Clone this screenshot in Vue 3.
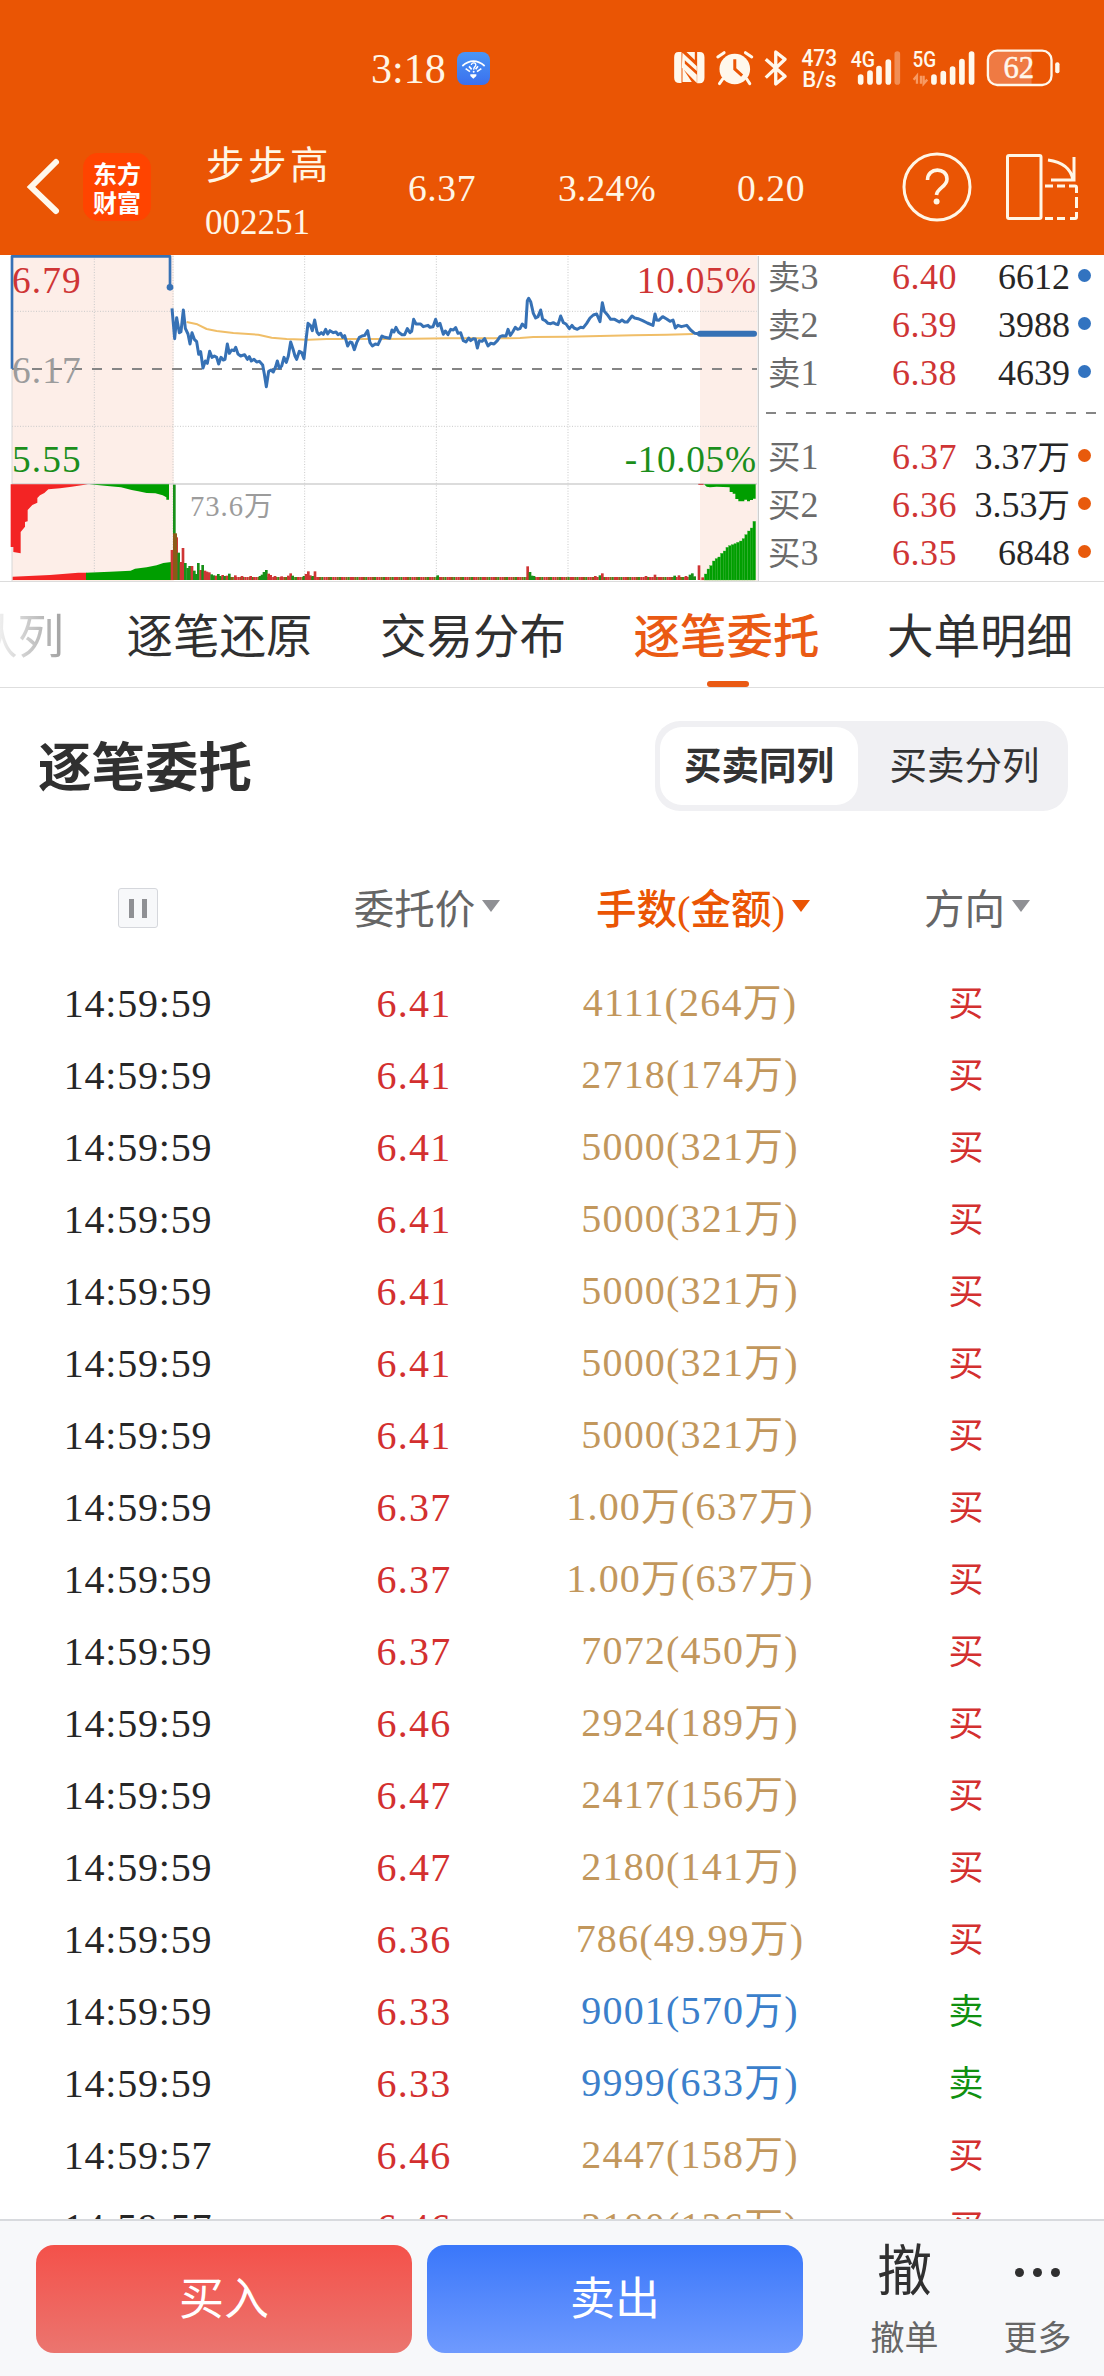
<script setup>
import { h } from 'vue'

// Wraps Chinese runs in a span so they can be sized independently of the digits.
const Mixed = ({ text }) =>
  text
    .split(/([\u4e00-\u9fff]+)/)
    .filter(Boolean)
    .map((part) => (/[\u4e00-\u9fff]/.test(part) ? h('span', { class: 'han' }, part) : part))
Mixed.props = ['text']

const tabs = ['逐笔还原', '交易分布', '逐笔委托', '大单明细']
const activeTab = '逐笔委托'

const sells = [
  ['卖3', '6.40', '6612'],
  ['卖2', '6.39', '3988'],
  ['卖1', '6.38', '4639'],
]
const buys = [
  ['买1', '6.37', '3.37万'],
  ['买2', '6.36', '3.53万'],
  ['买3', '6.35', '6848'],
]

const orders = [
  ['14:59:59', '6.41', '4111(264万)', '买'],
  ['14:59:59', '6.41', '2718(174万)', '买'],
  ['14:59:59', '6.41', '5000(321万)', '买'],
  ['14:59:59', '6.41', '5000(321万)', '买'],
  ['14:59:59', '6.41', '5000(321万)', '买'],
  ['14:59:59', '6.41', '5000(321万)', '买'],
  ['14:59:59', '6.41', '5000(321万)', '买'],
  ['14:59:59', '6.37', '1.00万(637万)', '买'],
  ['14:59:59', '6.37', '1.00万(637万)', '买'],
  ['14:59:59', '6.37', '7072(450万)', '买'],
  ['14:59:59', '6.46', '2924(189万)', '买'],
  ['14:59:59', '6.47', '2417(156万)', '买'],
  ['14:59:59', '6.47', '2180(141万)', '买'],
  ['14:59:59', '6.36', '786(49.99万)', '买'],
  ['14:59:59', '6.33', '9001(570万)', '卖'],
  ['14:59:59', '6.33', '9999(633万)', '卖'],
  ['14:59:57', '6.46', '2447(158万)', '买'],
  ['14:59:57', '6.46', '2100(136万)', '买'],
]

// Price line, in chart units (three per pixel).
const price = [
  '516,175 524,266 530,203 538,248 543,245 550,180 556,235 564,252 570,282 576,248 583,268 590,275 596,313',
  '602,305 609,354 616,333 622,340 629,304 636,322 643,318 650,322 656,342 663,322 670,330 675,328 682,282',
  '688,310 695,300 702,302 707,292 714,312 722,318 734,314 742,328 748,320 754,333 762,328 770,336 778,334',
  '788,345 793,372 799,410 806,364 813,360 820,366 827,350 832,333 838,355 845,348 852,322 859,337 865,318',
  '872,276 879,297 885,318 890,328 898,304 905,308 912,326 918,270 924,220 931,226 937,242 944,210 951,246',
  '957,254 964,248 970,253 977,238 983,252 990,242 1000,248 1008,246 1014,254 1022,250 1028,262 1034,257',
  '1043,288 1050,276 1056,278 1063,299 1070,278 1078,262 1086,258 1094,256 1103,242 1110,278 1117,288',
  '1126,282 1134,284 1146,258 1154,262 1169,265 1176,240 1182,246 1188,232 1196,247 1206,254 1214,254',
  '1222,236 1230,248 1235,244 1241,208 1248,222 1262,222 1270,230 1284,226 1290,232 1299,230 1307,208',
  '1313,228 1320,220 1330,253 1336,243 1344,254 1352,238 1360,240 1367,233 1374,250 1382,248 1390,272',
  '1398,276 1406,264 1412,272 1420,266 1426,267 1432,294 1438,272 1446,274 1454,266 1464,288 1472,280',
  '1482,282 1492,272 1500,260 1508,257 1518,258 1524,238 1531,256 1538,246 1546,232 1553,238 1560,236',
  '1567,222 1577,232 1582,152 1586,145 1592,155 1600,190 1607,204 1614,200 1622,180 1628,208 1636,212',
  '1644,220 1652,221 1660,218 1667,222 1674,224 1682,198 1690,218 1698,222 1708,236 1716,226 1722,234',
  '1732,238 1742,232 1750,233 1760,220 1770,204 1780,195 1790,192 1800,215 1807,158 1813,184 1822,194',
  '1832,208 1844,208 1858,216 1866,210 1874,216 1882,216 1896,198 1904,204 1914,206 1928,212 1942,219',
  '1959,226 1965,192 1970,210 1976,211 1988,200 2000,207 2010,214 2019,210 2026,234 2034,226 2044,230',
  '2060,226 2072,240 2084,250 2096,251',
].join(' ')

const average =
  '560,216 592,223 620,237 650,243 700,249 775,254 815,263 860,267 925,269 980,267 1140,267 1240,266 1350,265 1480,265 1560,264 1600,261 1700,260 1800,258 1900,256 2000,254 2080,252'

const baseline = 990
const tall = [
  [516, 90, 'r'], [523, 286, 'g'], [530, 128, 'r'], [536, 82, 'g'], [543, 54, 'r'], [549, 96, 'r'],
  [556, 51, 'g'], [563, 36, 'g'], [569, 42, 'g'], [576, 42, 'r'], [583, 28, 'g'], [589, 18, 'g'],
  [595, 51, 'g'], [602, 30, 'r'], [608, 45, 'g'], [615, 28, 'r'], [621, 25, 'r'], [628, 23, 'r'],
  [635, 17, 'g'], [641, 14, 'g'], [648, 13, 'r'], [655, 18, 'g'], [661, 12, 'g'], [668, 15, 'r'],
  [674, 12, 'g'], [681, 13, 'r'], [688, 19, 'g'], [706, 14, 'r'], [726, 12, 'r'], [752, 12, 'r'],
  [780, 12, 'g'], [786, 16, 'g'], [792, 24, 'g'], [799, 30, 'g'], [806, 19, 'r'], [812, 15, 'r'],
  [825, 12, 'r'], [845, 11, 'r'], [865, 13, 'r'], [872, 20, 'r'], [878, 13, 'g'], [912, 12, 'g'],
  [918, 18, 'r'], [925, 26, 'r'], [931, 14, 'r'], [938, 12, 'g'], [945, 26, 'r'], [1313, 14, 'g'],
  [1583, 41, 'r'], [1590, 24, 'g'], [1596, 13, 'g'], [1602, 12, 'g'], [1786, 12, 'r'], [1800, 14, 'g'],
  [1807, 20, 'r'], [1938, 12, 'r'], [1965, 16, 'r'], [2024, 13, 'g'], [2037, 14, 'r'], [2058, 12, 'r'],
  [2070, 16, 'g'], [2077, 20, 'g'], [2084, 11, 'g'], [2097, 44, 'r'], [2108, 8, 'r'],
]
const floor = Array.from({ length: 216 }, (_, i) => ({
  x: 660 + i * 6.6,
  color: ['#cf3535', '#8a6018', '#3f8a18'][((i * 7 + (i >> 2) * 5) % 9) % 3],
}))
const closing = [18, 33, 43, 57, 64, 69, 80, 87, 98, 103, 106, 109, 113, 117, 124, 136, 147, 156, 176].map(
  (height, i) => ({ x: 2113 + i * 8.1, height }),
)
</script>

<template>
  <div class="screen">
    <header>
      <div class="status">
        <span class="clock">3:18</span>
        <svg class="wifi" viewBox="0 0 99 99">
          <defs>
            <linearGradient id="wifi-bg" x1="0" y1="0" x2="0" y2="1">
              <stop offset="0" stop-color="#4b96f5" />
              <stop offset="1" stop-color="#3a70ee" />
            </linearGradient>
          </defs>
          <rect width="99" height="99" rx="24" fill="url(#wifi-bg)" />
          <g fill="none" stroke="#fff" stroke-width="5">
            <path d="M16 42q33-29 67 0" />
            <path d="M26 50l13 9M36 43l8 9M73 50l-13 9M63 43l-7 9" />
            <path d="M43 39c1-10 16-8 13 2-2 4-6 5-6 12" stroke-width="4" />
          </g>
          <circle cx="50" cy="59" r="3" fill="#fff" />
          <path d="M40 67h18v5l-9 8-9-8z" fill="#fff" />
        </svg>
        <svg class="indicators" viewBox="40 50 1170 130">
          <g fill="#fff8ec">
            <path d="M56 65h9v93h-6q-16 0-16-16V81q0-16 13-16zM120 65q14 0 14 16v61q0 16-14 17h-8V65z" />
            <path d="M68 67l43 41v14L75 90v10l36 33v25L66 112zM68 112l28 43H68zM80 65h25v24z" />
            <circle cx="225" cy="116" r="46" />
            <path d="M189 146l-10 14M261 146l9 14M174 80l19-13M276 80l-19-13" stroke="#fff8ec" stroke-width="9" stroke-linecap="round" />
            <path d="M225 87v29l22 20" fill="none" stroke="#ea5504" stroke-width="9" />
          </g>
          <path d="M318 87l58 51-28 23V65l28 22-58 55" fill="none" stroke="#fff8ec" stroke-width="10" stroke-linejoin="round" />
          <g class="sans" fill="#fff8ec">
            <text x="425" y="107" font-size="70" textLength="107" lengthAdjust="spacingAndGlyphs">473</text>
            <text x="428" y="169" font-size="66" textLength="102" lengthAdjust="spacingAndGlyphs">B/s</text>
            <text x="573" y="111" font-size="67" textLength="73" lengthAdjust="spacingAndGlyphs">4G</text>
            <text x="759" y="111" font-size="67" textLength="71" lengthAdjust="spacingAndGlyphs">5G</text>
          </g>
          <g stroke="#fff8ec" stroke-width="17" stroke-linecap="round">
            <path d="M603 140v15M631 128v27M658 115v40M686 95v60M823 140v15M851 130v25M879 116v39M907 94v61M936 71v84" />
            <path d="M713 71v84" opacity=".35" />
          </g>
          <path d="M772 160v-24l-10 12M784 136v24M792 136v24l11-12" fill="none" stroke="#f79a63" stroke-width="7" />
          <path d="M1006 63h110v99h-110q-20 0-20-20V83q0-20 20-20z" fill="#ef7a43" />
          <rect x="985" y="61" width="191" height="103" rx="28" fill="none" stroke="#fff8ec" stroke-width="7" />
          <rect x="1187" y="96" width="13" height="33" rx="6" fill="#fff8ec" />
          <text class="serif" x="1032" y="143" font-size="92" textLength="92" stroke="#fff8ec" stroke-width="1.500" fill="#fff8ec">62</text>
        </svg>
      </div>

      <div class="titlebar">
        <svg class="back" viewBox="0 0 36 60">
          <path d="M31 5L6 30l25 24" fill="none" stroke="#fff8ec" stroke-width="6" stroke-linecap="round" />
        </svg>
        <div class="logo"><span>东方</span><span>财富</span></div>
        <div class="stock">
          <span class="name">步步高</span>
          <span class="code">002251</span>
        </div>
        <span class="quote last">6.37</span>
        <span class="quote pct">3.24%</span>
        <span class="quote diff">0.20</span>
        <svg class="help" viewBox="0 0 70 70">
          <g fill="none" stroke="#fff6e6" stroke-width="3">
            <circle cx="35" cy="35" r="33" />
            <path d="M25.500 28c0-13 19.500-13 19.500-1 0 8-10 9-10.500 16" stroke-width="3.600" />
          </g>
          <circle cx="34.600" cy="49.500" r="3" fill="#fff6e6" />
        </svg>
        <svg class="rotate" viewBox="0 0 76 70">
          <g fill="none" stroke="#fff6e6" stroke-width="3">
            <rect x="3.500" y="3.500" width="33.500" height="63" rx="1.500" />
            <path d="M44 8q22 3 25 20M70 5v23H47" />
            <path d="M41 34h8M53 34h8M65 34h6q1.500 0 1.500 1.500V41M72.500 45v11M72.500 60v5q0 1.500-1.500 1.500h-5M61 66.500h-8M49 66.500h-8" />
          </g>
        </svg>
      </div>
    </header>

    <section class="market">
      <svg class="chart" viewBox="0 15 2280 978">
        <rect x="36" y="15" width="485" height="978" fill="#fdeee8" />
        <rect x="2100" y="15" width="171" height="978" fill="#fdeee8" />
        <g stroke="#c9c9c9" stroke-width="3" stroke-dasharray="3 5">
          <path d="M36 184H2270M36 529H2270M283 18V990M519 18V990M914 18V990M1309 18V990M1704 18V990" />
        </g>
        <path d="M36 18V993" stroke="#d6d6d6" stroke-width="3" />
        <path d="M36 357H2271" stroke="#858585" stroke-width="6" stroke-dasharray="30 30" />

        <g class="serif" font-size="112">
          <text x="36" y="130" fill="#cf3535" textLength="206">6.79</text>
          <text x="36" y="398" fill="#9c9c9c" textLength="206">6.17</text>
          <text x="36" y="665" fill="#1b8e1b" textLength="206">5.55</text>
          <text x="1910" y="130" fill="#cf3535" textLength="358">10.05%</text>
          <text x="1874" y="665" fill="#1b8e1b" textLength="394">-10.05%</text>
          <text x="570" y="797" font-size="86" fill="#9c9c9c" textLength="248">73.6万</text>
        </g>

        <path d="M36 702H2271" stroke="#d0d0d0" stroke-width="5" />

        <path d="M32 703H264L215 710 180 715 145 718 133 729 120 736 112 744V758L97 765 83 780V814L75 816V830L62 846V910L40 906V891H32z" fill="#f32424" />
        <path d="M268 703H507V749H499V742L488 736 466 730 440 729 415 724 395 720 363 712 330 709z" fill="#009e00" />
        <path d="M38 990V980L150 975 235 968H260V990z" fill="#f32424" />
        <path d="M258 990V968L330 965 392 962 405 956 440 952 470 946 490 939 514 936V990z" fill="#009e00" />

        <rect v-for="b in floor" :key="b.x" :x="b.x" y="981" width="6.600" height="9" :fill="b.color" />
        <rect
          v-for="[x, height, c] in tall"
          :key="'t' + x"
          :x="x - 4"
          :y="baseline - height"
          width="8"
          :height="height"
          :fill="c === 'r' ? '#cf3535' : '#189018'"
        />
        <path d="M519 850V990h12V850z" fill="#8b5a18" />
        <g fill="#009e00" stroke="#2fae2f" stroke-width="1">
          <rect v-for="b in closing" :key="b.x" :x="b.x" :y="baseline - b.height" width="8.100" :height="b.height" />
        </g>
        <path d="M2095 703h16" stroke="#cf3535" stroke-width="3" />
        <path d="M2112 703H2267V746H2259V750H2250V754H2241V749H2233V754H2215V747H2206V731H2198V726H2189V712L2150 710 2130 712 2120 710z" fill="#009e00" />

        <g fill="none" stroke-linejoin="round">
          <polyline :points="average" stroke="#f0be68" stroke-width="6" />
          <g stroke="#3671b5">
            <path d="M36 356V19H510V112" stroke-width="8" />
            <polyline :points="price" stroke-width="9" />
            <path d="M2100 251H2262" stroke-width="18" stroke-linecap="round" />
          </g>
        </g>
        <circle cx="510" cy="112" r="10" fill="#3671b5" />
        <path d="M2275 18V993" stroke="#cfcfcf" stroke-width="4" />
      </svg>

      <div class="book">
        <div class="levels sells">
          <div v-for="[label, p, qty] in sells" :key="label" class="level">
            <span class="label"><Mixed :text="label" /></span>
            <span class="p">{{ p }}</span>
            <span class="qty"><Mixed :text="qty" /></span>
            <i />
          </div>
        </div>
        <div class="split" />
        <div class="levels">
          <div v-for="[label, p, qty] in buys" :key="label" class="level">
            <span class="label"><Mixed :text="label" /></span>
            <span class="p">{{ p }}</span>
            <span class="qty"><Mixed :text="qty" /></span>
            <i />
          </div>
        </div>
      </div>
    </section>

    <nav class="tabs">
      <span class="cut">队列</span>
      <span v-for="t in tabs" :key="t" :class="{ active: t === activeTab }">{{ t }}</span>
    </nav>

    <section class="heading">
      <h1>逐笔委托</h1>
      <div class="toggle">
        <span class="on">买卖同列</span>
        <span>买卖分列</span>
      </div>
    </section>

    <div class="columns">
      <div class="cell time"><span class="pause"><b /><b /></span></div>
      <div class="cell price">委托价<i class="arrow" /></div>
      <div class="cell amount hot">手数(金额)<i class="arrow" /></div>
      <div class="cell side">方向<i class="arrow" /></div>
    </div>

    <main>
      <div v-for="([time, p, amount, side], i) in orders" :key="i" class="order" :class="{ sell: side === '卖' }">
        <span class="cell time">{{ time }}</span>
        <span class="cell price">{{ p }}</span>
        <span class="cell amount"><Mixed :text="amount" /></span>
        <span class="cell side">{{ side }}</span>
      </div>
    </main>

    <footer>
      <button class="buy">买入</button>
      <button class="sell-btn">卖出</button>
      <div class="action cancel">
        <span class="glyph">撤</span>
        <span class="caption">撤单</span>
      </div>
      <div class="action more">
        <span class="glyph dots"><i /><i /><i /></span>
        <span class="caption">更多</span>
      </div>
    </footer>
  </div>
</template>

<style>
body {
  background: #fff;
}
.han {
  font-size: 0.9em;
  line-height: 0;
}
.amount .han {
  font-size: 0.97em;
}
</style>

<style scoped>
.screen {
  width: 1104px;
  height: 2376px;
  display: flex;
  flex-direction: column;
  overflow: hidden;
  background: #fff;
  font-family: 'Liberation Serif', 'Noto Sans CJK SC', serif;
  color: #262626;
  white-space: nowrap;
}
header {
  height: 255px;
  flex: none;
  background: #ea5504;
  color: #fff6e6;
}
.status {
  height: 137px;
  display: flex;
  align-items: center;
  padding-left: 371px;
}
.clock {
  width: 86px;
  font-size: 42px;
}
.wifi {
  width: 33px;
  height: 33px;
}
.indicators {
  width: 390px;
  height: 43.3px;
  margin-left: 183px;
}
.sans {
  font-family: Roboto, sans-serif;
  font-weight: 500;
}
.serif {
  font-family: 'Liberation Serif', 'Noto Sans CJK SC', serif;
}
.titlebar {
  display: flex;
  align-items: flex-start;
}
.titlebar > * {
  flex: none;
}
.back {
  width: 36px;
  height: 60px;
  margin: 20px 22px 0 25px;
}
.logo {
  width: 68px;
  height: 68px;
  margin-top: 16px;
  box-sizing: border-box;
  padding-top: 5px;
  border-radius: 15px;
  background: #ff4400;
  color: #fff;
  font: bold 24px/29px 'Noto Sans CJK SC', sans-serif;
  display: flex;
  flex-direction: column;
  align-items: center;
}
.stock {
  width: 203px;
  margin-left: 54px;
  display: flex;
  flex-direction: column;
}
.name {
  font-size: 38.500px;
  line-height: 58px;
  letter-spacing: 3.500px;
  padding-left: 1px;
}
.code {
  font-size: 35px;
  line-height: 56px;
}
.quote {
  font-size: 37.500px;
  line-height: 104px;
  letter-spacing: 0.600px;
}
.last {
  width: 150px;
}
.pct {
  width: 179px;
  letter-spacing: 0.200px;
}
.diff {
  width: 165px;
}
.help {
  width: 70px;
  height: 70px;
  margin-top: 15px;
}
.rotate {
  width: 76px;
  height: 70px;
  margin: 15px 0 0 32px;
}

.market {
  height: 326px;
  flex: none;
  display: flex;
  border-bottom: 1px solid #dcdcdc;
}
.chart {
  width: 760px;
  height: 326px;
  flex: none;
}
.book {
  flex: 1;
}
.levels {
  display: flex;
  flex-direction: column;
  gap: 4px;
}
.level {
  height: 44px;
  display: flex;
  align-items: center;
  font-size: 36px;
  padding-left: 8px;
}
.label {
  width: 124px;
  color: #6b6b6b;
}
.p {
  width: 70px;
  color: #cf3535;
  letter-spacing: 0.500px;
}
.qty {
  flex: 1;
  text-align: right;
}
.level i {
  width: 13px;
  height: 13px;
  margin: -4px 13px 0 8px;
  border-radius: 50%;
  background: #e85a0c;
}
.sells .level i {
  background: #3273c0;
}
.split {
  height: 2px;
  margin: 17px 8px 21px 6px;
  background: repeating-linear-gradient(90deg, #858585 0 10px, transparent 10px 20px);
}

.tabs {
  height: 105px;
  flex: none;
  display: flex;
  align-items: stretch;
  gap: 67.500px;
  font-size: 46.500px;
  line-height: 112px;
  color: #303030;
  border-bottom: 1px solid #dedede;
}
.tabs span {
  position: relative;
  flex: none;
}
.cut {
  width: 64px;
  margin-right: -5px;
  direction: rtl;
  overflow: hidden;
  background: linear-gradient(90deg, #eee, #a0a0a0);
  -webkit-background-clip: text;
  background-clip: text;
  color: transparent;
}
.tabs .active {
  color: #ea5a14;
  font-weight: 500;
}
.active::after {
  content: '';
  position: absolute;
  left: 73px;
  bottom: 0;
  width: 42px;
  height: 6px;
  border-radius: 3px;
  background: #ea5a14;
}

.heading {
  height: 193px;
  flex: none;
  display: flex;
  align-items: flex-start;
  justify-content: space-between;
  padding: 33px 36px 0 38px;
  box-sizing: border-box;
}
h1 {
  margin: 0;
  font-size: 53.500px;
  line-height: 96px;
  font-weight: bold;
  color: #303030;
}
.toggle {
  width: 413px;
  height: 90px;
  box-sizing: border-box;
  padding: 6px 5px;
  display: flex;
  border-radius: 25px;
  background: #f0f0f3;
  color: #333;
  font-size: 37.500px;
  line-height: 80px;
  text-align: center;
}
.toggle span {
  flex: 1;
  padding-left: 8px;
}
.toggle .on {
  flex: none;
  width: 198px;
  height: 78px;
  padding: 0;
  border-radius: 22px;
  background: #fff;
  font-weight: bold;
}

.columns,
.order {
  display: flex;
  flex: none;
}
.cell {
  width: 276px;
  display: flex;
  align-items: center;
  justify-content: center;
  flex: none;
}
.columns {
  height: 58px;
  font-size: 40.500px;
  color: #666;
}
.columns .price,
.columns .amount,
.columns .side {
  gap: 7px;
  box-sizing: border-box;
  padding: 0 0 8px 26px;
}
.columns .side {
  padding-left: 22px;
}
.hot {
  color: #ea5504;
  font-weight: 500;
}
.arrow {
  border: 9px solid transparent;
  border-top: 12px solid #8f9094;
  border-bottom: 0;
}
.hot .arrow {
  border-top-color: #ea5504;
}
.pause {
  width: 38px;
  height: 38px;
  margin-top: -4px;
  border: 1px solid #d5d7dc;
  border-radius: 3px;
  background: #f7f8fa;
  display: flex;
  align-items: center;
  justify-content: center;
  gap: 8px;
}
.pause b {
  width: 5px;
  height: 19px;
  background: #8f9094;
}

main {
  flex: 1;
  min-height: 0;
  overflow: hidden;
  padding-top: 28px;
}
.order {
  height: 72px;
  font-size: 40px;
  letter-spacing: 0.800px;
}
.order .price {
  color: #d3302f;
  letter-spacing: 1.200px;
}
.order .amount {
  display: block;
  text-align: center;
  line-height: 72px;
  color: #c2975c;
  letter-spacing: 1.200px;
}
.order .side {
  box-sizing: border-box;
  padding: 0 0 5px 1px;
  color: #d3302f;
  font-size: 35px;
}
.sell .amount {
  color: #3b7fcb;
}
.order.sell .side {
  color: #109010;
}

footer {
  height: 131px;
  flex: none;
  display: flex;
  align-items: flex-start;
  padding: 24px 0 0 36px;
  border-top: 2px solid #d8dade;
  background: #f7f8fa;
}
button {
  width: 376px;
  height: 108px;
  flex: none;
  margin: 0 15px 0 0;
  padding: 0;
  border: 0;
  border-radius: 18px;
  color: #fff;
  font-family: inherit;
  font-size: 45px;
  line-height: 110px;
}
.buy {
  background: linear-gradient(#f4514a, #eb756f);
}
.sell-btn {
  background: linear-gradient(#3a77fa, #6f9afe);
}
.action {
  display: flex;
  flex-direction: column;
  align-items: center;
  width: 133px;
}
.cancel {
  margin-left: 20px;
}
.glyph {
  height: 54px;
  line-height: 54px;
  font-size: 55px;
  color: #303030;
}
.dots {
  display: flex;
  align-items: center;
  gap: 9px;
}
.dots i {
  width: 9px;
  height: 9px;
  border-radius: 50%;
  background: #303030;
}
.caption {
  margin-top: 16px;
  font-size: 34px;
  line-height: 48px;
  color: #666;
}
</style>
